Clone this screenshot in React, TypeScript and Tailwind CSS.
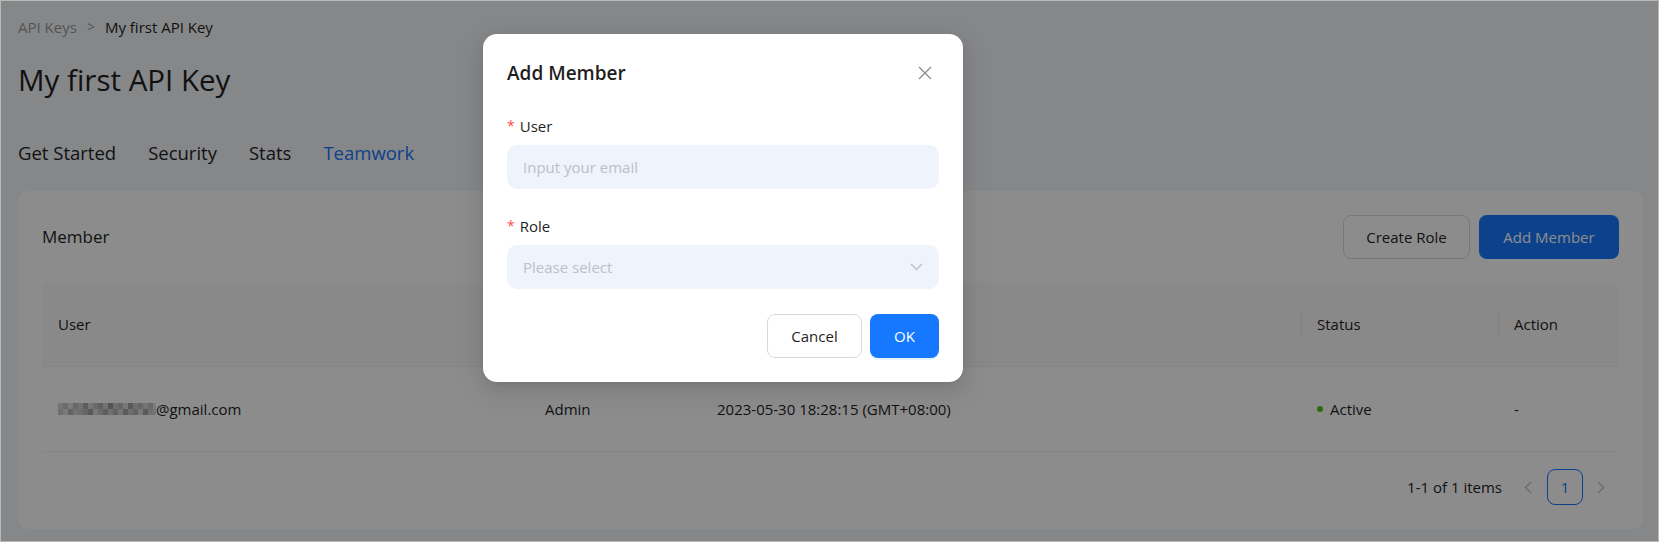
import React from "react";

const mosaic = [
  ["#d6d6d6", "#c4c4c4", "#e0e0e0", "#bdbdbd", "#cfcfcf", "#a9a9a9", "#d8d8d8", "#c2c2c2", "#b0b0b0", "#d2d2d2", "#9c9c9c", "#c8c8c8", "#bcbcbc", "#dadada", "#a4a4a4", "#cacaca", "#b8b8b8", "#d4d4d4", "#c0c0c0", "#e2e2e2"],
  ["#cbcbcb", "#dedede", "#b6b6b6", "#d0d0d0", "#c6c6c6", "#bababa", "#a0a0a0", "#d9d9d9", "#c3c3c3", "#acacac", "#cecece", "#b2b2b2", "#d5d5d5", "#a8a8a8", "#c9c9c9", "#b4b4b4", "#dcdcdc", "#a6a6a6", "#cdcdcd", "#d3d3d3"],
];

function Mosaic() {
  return (
    <svg width="98" height="12" viewBox="0 0 98 12" className="shrink-0">
      {mosaic.map((row, r) =>
        row.map((c, i) => (
          <rect key={`${r}-${i}`} x={i * 5} y={r * 6} width="5" height="6" fill={c} />
        ))
      )}
    </svg>
  );
}

function Chevron({ dir }: { dir: "left" | "right" | "down" }) {
  if (dir === "down")
    return (
      <svg width="13" height="8" viewBox="0 0 13 8" fill="none">
        <path d="M1 1L6.5 6.5L12 1" stroke="#bfbfbf" strokeWidth="1.3" />
      </svg>
    );
  return (
    <svg width="8" height="13" viewBox="0 0 8 13" fill="none">
      {dir === "left" ? (
        <path d="M7 1L1.5 6.5L7 12" stroke="#bfbfbf" strokeWidth="1.3" />
      ) : (
        <path d="M1 1L6.5 6.5L1 12" stroke="#bfbfbf" strokeWidth="1.3" />
      )}
    </svg>
  );
}

function HeadCell({ label, sep }: { label?: string; sep?: boolean }) {
  return (
    <div className="relative flex items-center pl-4 h-full">
      {sep && <div className="absolute left-0 top-1/2 -translate-y-1/2 w-px h-[25px] bg-[#eaeaea]" />}
      {label && <span className="font-medium">{label}</span>}
    </div>
  );
}

export default function App() {
  return (
    <div className="relative w-[1659px] h-[542px] overflow-hidden border border-[#b9b9b9] bg-[#f4f6fa] pl-[17px] pr-[15px] pt-[15px] font-['Open_Sans',sans-serif] text-[#1f1f1f]">
      {/* Breadcrumb */}
      <div className="flex items-center text-[15px] leading-[22px]">
        <span className="text-[#9a9a9a]">API Keys</span>
        <span className="mx-[10px] text-[#9a9a9a] text-[14px]">&gt;</span>
        <span className="text-[#1f1f1f]">My first API Key</span>
      </div>

      {/* Title */}
      <h1 className="mt-[23px] text-[29.5px] leading-[38px] font-normal">My first API Key</h1>

      {/* Tabs */}
      <div className="mt-[41px] flex items-center gap-8 text-[18.5px] leading-[26px]">
        <span>Get Started</span>
        <span>Security</span>
        <span>Stats</span>
        <span className="text-[#1677ff]">Teamwork</span>
      </div>

      {/* Card */}
      <div className="mt-[25px] rounded-[10px] bg-white px-6 pt-6 pb-6">
        <div className="flex h-[44px] items-center justify-between">
          <span className="text-[17px] font-medium">Member</span>
          <div className="flex items-center gap-[9px]">
            <button className="w-[127px] h-[44px] rounded-[8px] border border-[#d9d9d9] bg-white text-[15px] text-[#1f1f1f]">
              Create Role
            </button>
            <button className="w-[140px] h-[44px] rounded-[8px] bg-[#1677ff] text-[15px] text-white">
              Add Member
            </button>
          </div>
        </div>

        {/* Table */}
        <div className="mt-6 text-[15px]">
          <div className="grid grid-cols-[487px_172px_600px_197px_120px] h-[84px] rounded-t-[8px] bg-[#fafafa] border-b border-[#f0f0f0]">
            <HeadCell label="User" />
            <HeadCell label="Role" sep />
            <HeadCell sep />
            <HeadCell label="Status" sep />
            <HeadCell label="Action" sep />
          </div>
          <div className="grid grid-cols-[487px_172px_600px_197px_120px] h-[85px] border-b border-[#f0f0f0] items-center">
            <div className="flex items-center pl-4">
              <Mosaic />
              <span>@gmail.com</span>
            </div>
            <div className="pl-4">Admin</div>
            <div className="pl-4">2023-05-30 18:28:15 (GMT+08:00)</div>
            <div className="pl-4 flex items-center">
              <span className="w-[6px] h-[6px] rounded-full bg-[#52c41a] mr-[7px]" />
              <span>Active</span>
            </div>
            <div className="pl-4">-</div>
          </div>
        </div>

        {/* Pagination */}
        <div className="mt-[17px] flex items-center justify-end text-[15px]">
          <span className="mr-2">1-1 of 1 items</span>
          <div className="w-9 h-9 flex items-center justify-center">
            <Chevron dir="left" />
          </div>
          <div className="ml-px w-9 h-9 flex items-center justify-center rounded-[8px] border border-[#1677ff] bg-white text-[#1677ff] font-medium">
            1
          </div>
          <div className="w-9 h-9 flex items-center justify-center">
            <Chevron dir="right" />
          </div>
        </div>
      </div>

      {/* Mask */}
      <div className="absolute inset-0 bg-black/45" />

      {/* Modal */}
      <div className="absolute left-[482px] top-[33px] w-[480px] h-[348px] rounded-[14px] bg-white px-6 pt-[23px] pb-6 shadow-[0_6px_16px_0_rgba(0,0,0,0.08),0_3px_6px_-4px_rgba(0,0,0,0.12),0_9px_28px_8px_rgba(0,0,0,0.05)]">
        <div className="flex h-8 items-center justify-between">
          <span className="text-[19px] font-semibold text-[#1f1f1f]">Add Member</span>
          <div className="w-8 h-8 -mr-[2px] flex items-center justify-center">
            <svg width="14" height="14" viewBox="0 0 14 14" fill="none">
              <path d="M1 1L13 13M13 1L1 13" stroke="#8c8c8c" strokeWidth="1.3" />
            </svg>
          </div>
        </div>

        <div className="mt-[26px] flex h-[22px] items-center text-[15px] leading-[22px]">
          <span className="mr-[5px] text-[#ff4d4f] text-[14px]">*</span>
          <span>User</span>
        </div>
        <div className="mt-2 flex h-11 items-center rounded-[10px] bg-[#eef3fc] px-4 text-[15px] text-[#bcc0c7]">
          Input your email
        </div>

        <div className="mt-[26px] flex h-[22px] items-center text-[15px] leading-[22px]">
          <span className="mr-[5px] text-[#ff4d4f] text-[14px]">*</span>
          <span>Role</span>
        </div>
        <div className="mt-2 flex h-11 items-center justify-between rounded-[10px] bg-[#eef3fc] pl-4 pr-4 text-[15px] text-[#bcc0c7]">
          <span>Please select</span>
          <Chevron dir="down" />
        </div>

        <div className="mt-[25px] flex justify-end gap-2">
          <button className="w-[95px] h-11 rounded-[8px] border border-[#d9d9d9] bg-white text-[15px] text-[#1f1f1f]">
            Cancel
          </button>
          <button className="w-[69px] h-11 rounded-[8px] bg-[#1677ff] text-[15px] text-white shadow-[0_2px_0_rgba(5,145,255,0.1)]">
            OK
          </button>
        </div>
      </div>
    </div>
  );
}
